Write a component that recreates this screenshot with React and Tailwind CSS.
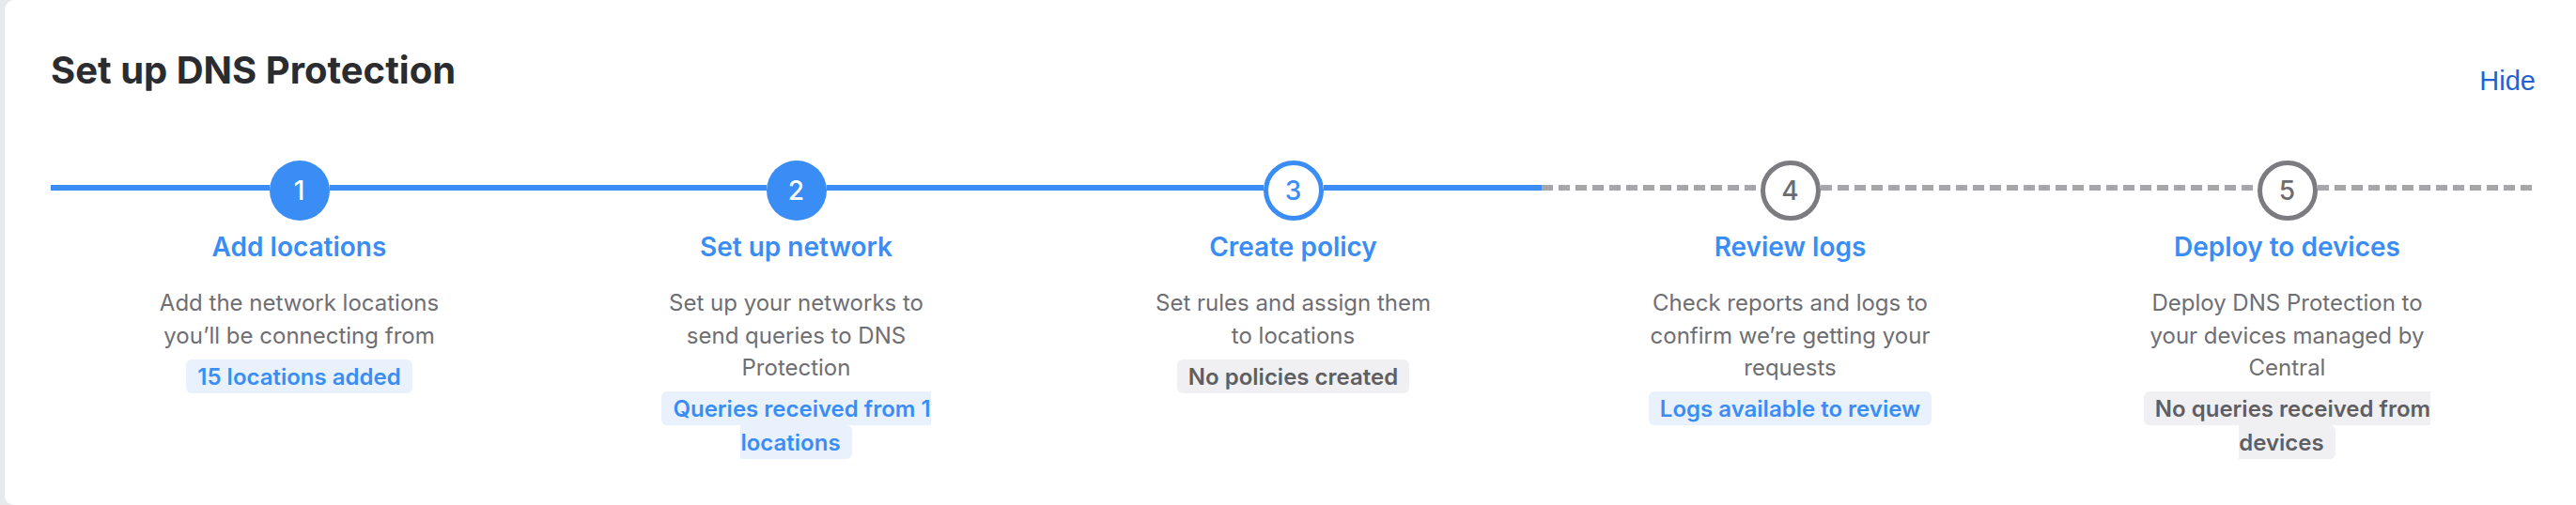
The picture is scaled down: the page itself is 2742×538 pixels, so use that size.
const steps = [
  {
    n: 1,
    title: 'Add locations',
    desc: 'Add the network locations you’ll be connecting from',
    badge: '15 locations added',
    state: 'done',
    line: 'solid',
    ok: true,
  },
  {
    n: 2,
    title: 'Set up network',
    desc: 'Set up your networks to send queries to DNS Protection',
    badge: 'Queries received from 1 locations',
    state: 'done',
    line: 'solid',
    ok: true,
  },
  {
    n: 3,
    title: 'Create policy',
    desc: 'Set rules and assign them to locations',
    badge: 'No policies created',
    state: 'current',
    line: 'solid',
    ok: false,
  },
  {
    n: 4,
    title: 'Review logs',
    desc: 'Check reports and logs to confirm we’re getting your requests',
    badge: 'Logs available to review',
    state: 'todo',
    line: 'dashed',
    ok: true,
  },
  {
    n: 5,
    title: 'Deploy to devices',
    desc: 'Deploy DNS Protection to your devices managed by Central',
    badge: 'No queries received from devices',
    state: 'todo',
    line: 'dashed',
    ok: false,
  },
]

function Segment({ kind }) {
  if (kind === 'solid') {
    return <div className="flex-1 h-[6px] mt-[26px] bg-[#3a8df4]" />
  }
  return (
    <div className="flex-1 h-[6px] mt-[26px] bg-[repeating-linear-gradient(90deg,#a6a6ab_0px,#a6a6ab_12px,transparent_12px,transparent_18px)]" />
  )
}

function StepCircle({ n, state }) {
  if (state === 'done') {
    return (
      <div className="size-[64px] shrink-0 rounded-full bg-[#3a8df4] text-white flex items-center justify-center text-[28px] font-medium">
        {n}
      </div>
    )
  }
  if (state === 'current') {
    return (
      <div className="size-[64px] shrink-0 rounded-full bg-white border-[5px] border-[#3a8df4] text-[#3a8df4] flex items-center justify-center text-[28px] font-medium">
        {n}
      </div>
    )
  }
  return (
    <div className="size-[64px] shrink-0 rounded-full bg-white border-[5px] border-[#7b7b80] text-[#6c6c70] flex items-center justify-center text-[28px] font-medium">
      {n}
    </div>
  )
}

function Step({ step }) {
  return (
    <div className="flex flex-col items-center text-center">
      <div className="flex items-start w-full h-[64px]">
        <Segment kind={step.line} />
        <StepCircle n={step.n} state={step.state} />
        <Segment kind={step.line} />
      </div>
      <h3 className="mt-[8px] text-[28px] leading-[40px] font-semibold text-[#3a8df4]">{step.title}</h3>
      <p className="mt-[23px] max-w-[312px] text-[24px] leading-[34.5px] text-[#6e6e73]">{step.desc}</p>
      <div className="mt-[8px] max-w-[312px] text-[24px] leading-[36px] font-semibold">
        <span
          className={
            step.ok
              ? 'py-[3.5px] px-3 rounded-[6px] bg-[#e8f1fc] text-[#3a8df4]'
              : 'py-[3.5px] px-3 rounded-[6px] bg-[#f0f0f2] text-[#5f5f63]'
          }
        >
          {step.badge}
        </span>
      </div>
    </div>
  )
}

export default function App() {
  return (
    <div className="w-[2742px] h-[538px] bg-[#e8e9eb] pl-[5px] overflow-hidden font-['Inter',sans-serif]">
      <div className="h-full bg-white rounded-l-[10px] pl-[49px] pr-[43px] pt-[51px]">
        <div className="flex justify-between items-start h-[51px]">
          <h2 className="text-[40px] leading-[48px] font-bold text-[#2a2c30]">Set up DNS Protection</h2>
          <button className="mt-[19px] text-[29px] leading-[32px] text-[#1f62d0] font-['Liberation_Sans',Arial,sans-serif]">
            Hide
          </button>
        </div>
        <div className="mt-[69px] grid grid-cols-5">
          {steps.map((s) => (
            <Step key={s.n} step={s} />
          ))}
        </div>
      </div>
    </div>
  )
}
